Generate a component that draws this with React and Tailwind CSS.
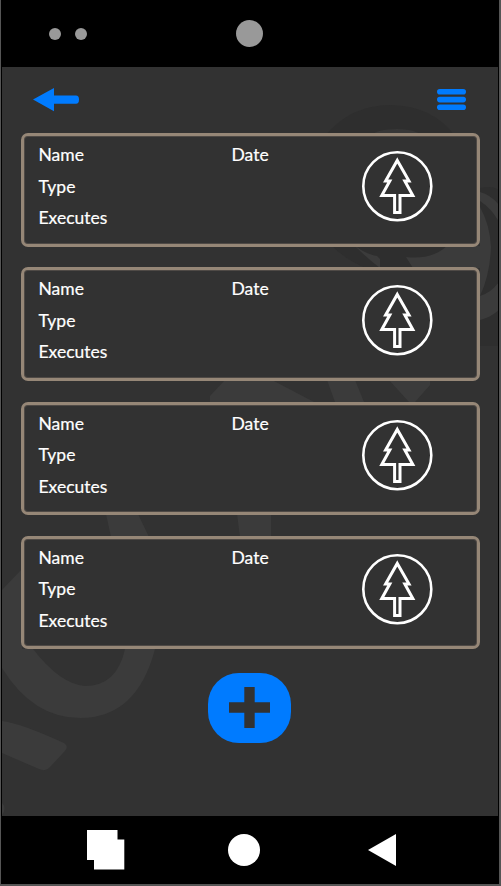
import React from "react";

function Tree() {
  return (
    <svg className="block h-[72px] w-[72px]" viewBox="0 0 72 72" fill="none" stroke="white">
      <circle cx="36.3" cy="36.2" r="34" strokeWidth="2.6" />
      <path strokeWidth="3" d="M36.3 10.4 L48 31 H43.8 L51.8 45.4 H39 V62.4 H33.6 V45.4 H20.8 L28.8 31 H24.6 Z" />
    </svg>
  );
}

function Card() {
  return (
    <article className="flex h-[113.5px] rounded-[7px] border-[3px] border-[#968777] bg-[#323232] text-[17.5px] leading-[31.5px] text-white shadow-[inset_0_0_0_1px_rgba(150,134,118,0.3)] [-webkit-text-stroke:0.2px_white]">
      <div className="w-[208px] shrink-0 pt-[3px] pl-[15px]">
        <p>Name</p>
        <p>Type</p>
        <p>Executes</p>
      </div>
      <p className="w-[129px] shrink-0 pt-[3px]">Date</p>
      <div className="shrink-0 pt-[14px]">
        <Tree />
      </div>
    </article>
  );
}

function Watermark() {
  return (
    <svg className="absolute inset-0 h-full w-full" viewBox="0 0 496 749">
      <g transform="translate(-2 -67)">
        <path fill="#2e2e2e" d="M325 136 Q350 105 391 105 Q433 106 455 136Z" />
        <path fill="#373737" d="M370 136 Q377 129 397 129 Q415 129 423 136Z" />
        <path fill="#2e2e2e" d="M332 246 H450 V268 H366 Q346 260 332 246Z M480 188 Q492 185 499 190 V346 H480Z" />
        <path fill="#3b3b3b" d="M355 246 Q366 254 377 256 L380 259 V268 Q368 259 355 246Z M406 257 Q432 260 447 246 H481 V268 H413Z" />
        <path fill="#3b3b3b" d="M480 192 Q491 195 499 205 V222 Q492 209 480 201Z M480 207 Q490 225 491 247 Q490 275 480 296Q491 293 499 282 V310 Q490 318 480 320Z" />
        <path fill="#3b3b3b" d="M225 380 H272 L314 402 H210 V396Z M327 380 H355 L364 402 H335Z M389 380 H430 V385 L415 402 H409Z M106 514 H138 L149 537 H111Z M237 514 H271 V537 H240Z" />
        <path fill="#3b3b3b" fillRule="evenodd" d="M2 590 L22 569 V649 H155 Q137 718 80 718 Q33 718 2 668Z M33 649 H125 Q117 686 85 686 Q60 684 33 649Z" />
        <path fill="#3b3b3b" d="M2 721 Q20 723 64 743 Q70 747 63 753 L50 767 Q46 772 39 769 L2 753Z M2 803 Q7 808 2 815Z" />
      </g>
    </svg>
  );
}

export default function App() {
  return (
    <div className="flex h-[886px] w-[501px] flex-col border-r-2 border-b-2 border-l border-[#555] bg-black px-px font-['Lato',sans-serif]">
      <header className="flex h-[67px] shrink-0 items-center pl-[47px]">
        <i className="size-[12px] rounded-full bg-[#999]" />
        <i className="ml-[14px] size-[12px] rounded-full bg-[#999]" />
        <i className="ml-[149px] size-[27px] rounded-full bg-[#999]" />
      </header>
      <main className="relative h-[749px] shrink-0 bg-[#323232]">
        <Watermark />
        <div className="relative">
          <nav className="flex h-[66px] items-center justify-between pr-[32px] pl-[31px]">
            <svg className="h-[24px] w-[47px]" viewBox="0 0 47 24" fill="#007bff">
              <path d="M0 11.5 L21 0 V7.5 H43 Q46 7.5 46 11.5 Q46 15.8 43 15.8 H21 V23.2Z" />
            </svg>
            <svg className="h-[22px] w-[29px]" viewBox="0 0 29 22" fill="#007bff">
              <rect y="0" width="29" height="5.6" rx="2.8" />
              <rect y="7.8" width="29" height="5.6" rx="2.8" />
              <rect y="15.5" width="29" height="5.6" rx="2.8" />
            </svg>
          </nav>
          <section className="flex flex-col gap-[20.8px] pr-[18px] pl-[18.5px]">
            <Card />
            <Card />
            <Card />
            <Card />
          </section>
          <button className="mt-[23.5px] ml-[206px] flex h-[70px] w-[83px] items-center justify-center rounded-[31px] bg-[#007bff]">
            <svg className="size-[41px]" viewBox="0 0 41 41" fill="#323232">
              <path d="M15.3 0H25.7V15.3H41V25.7H25.7V41H15.3V25.7H0V15.3H15.3Z" />
            </svg>
          </button>
        </div>
      </main>
      <footer className="flex flex-1 items-center pl-[85px]">
        <svg className="h-[40px] w-[38px]" viewBox="0 0 38 40" fill="white">
          <path d="M0 0H30.5V9.5H37.3V39.5H7V30H0Z" />
        </svg>
        <i className="ml-[103px] size-[32px] rounded-full bg-white" />
        <svg className="ml-[108px] h-[32px] w-[28px]" viewBox="0 0 28 32" fill="white">
          <path d="M0 16L28 0V32Z" />
        </svg>
      </footer>
    </div>
  );
}
